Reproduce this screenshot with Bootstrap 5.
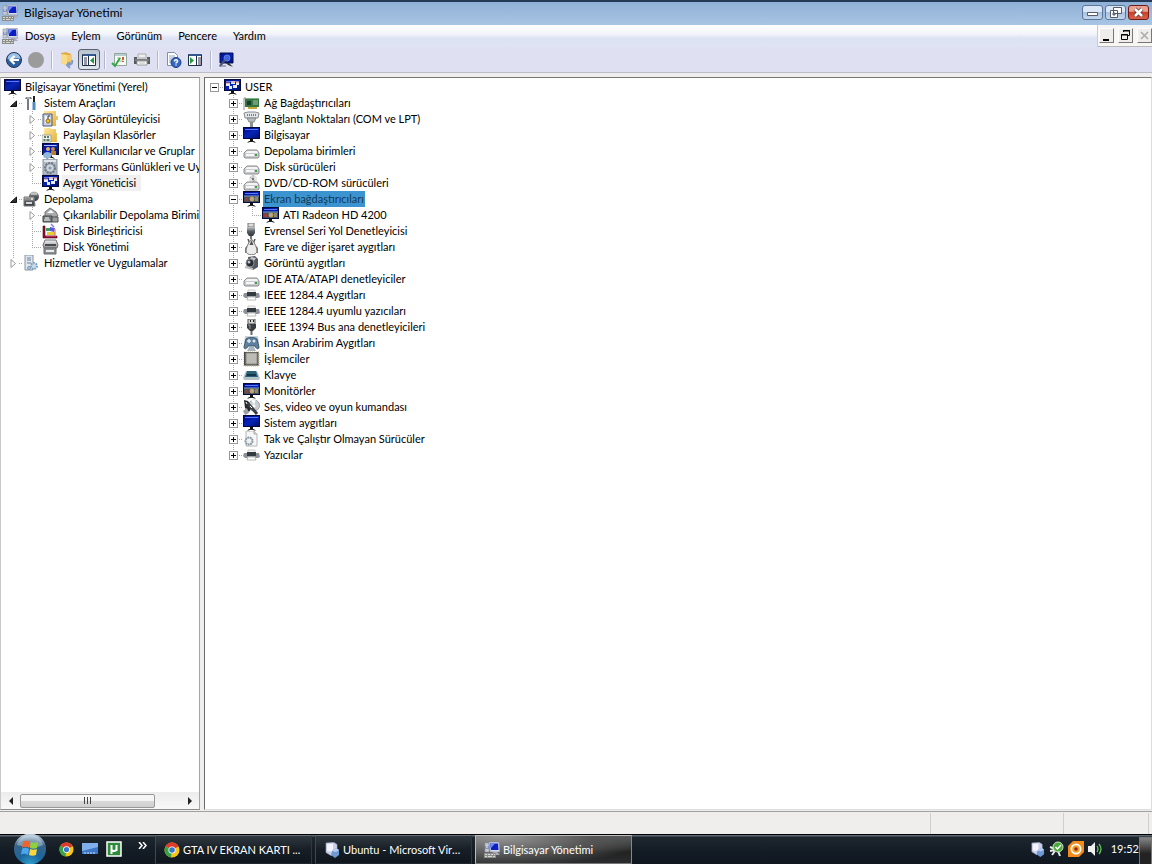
<!DOCTYPE html>
<html lang="tr">
<head>
<meta charset="utf-8">
<meta name="viewport" content="width=device-width, initial-scale=1">
<title>Bilgisayar Yönetimi</title>
<link href="https://cdn.jsdelivr.net/npm/bootstrap@5.3.0/dist/css/bootstrap.min.css" rel="stylesheet">
<style>
  body { font-family: Lato, Roboto, sans-serif; font-size: 11px; line-height: 16px; color: #000; background: #f0eeed; }
  button { font: inherit; color: inherit; }
  a { color: inherit; text-decoration: none; }
  .titlebar { height: 25px; border-top: 2px solid #223a55; background: linear-gradient(#8fb0d6, #a9c5e4); font-size: 12px; padding: 0 3px 2px 2px; }
  .win-btn { width: 21px; height: 15px; border: 1px solid #5b7699; border-radius: 3px; background: linear-gradient(#d9e6f5 45%, #a9c1de 50%, #c4d7ec); }
  .win-close { border-color: #701c14; background: linear-gradient(#eba191 40%, #c9402b 50%, #d9624a); }
  .win-controls { gap: 2px; }
  .menubar { height: 22px; background: linear-gradient(#fff, #f3f5fb 40%, #dde3f3 60%, #dfe4f4); padding-left: 2px; }
  .menu-links { gap: 16px; padding-left: 7px; }
  .caption { padding-left: 6px; }
  .mdi { width: 55px; height: 22px; background: #f7f6f5; border-left: 1px solid #ccc; border-bottom: 1px solid #bbb; }
  .mdi button { width: 15px; height: 15px; border: 1px solid; border-color: #fff #777 #777 #fff; background: #efedec; }
  .toolbar { height: 26px; background: #dfe1f3; border-bottom: 1px solid #bcbccb; padding-left: 3px; }
  .tool { width: 22px; height: 21px; border: 1px solid transparent; background: none; border-radius: 3px; }
  .tool.active { border-color: #59636f; background: linear-gradient(#b8c3cd, #dfe6ed); }
  .sep { width: 1px; height: 18px; background: #b4b7c9; margin: 0 4px; box-shadow: 1px 0 #f8f8ff; }
  .workspace { margin-top: 4px; }
  .pane { background: #fff; }
  .pane-left { width: 200px; border: 1px solid #8a8a8a; border-color: #8a8a8a #a5a5a5 #8a8a8a #c9c9c9; }
  .pane-right { margin-left: 4px; border-left: 1px solid #6c6c6c; border-top: 1px solid #777; border-bottom: 1px solid #ddd; border-right: 1px solid #ddd; padding-right: 8px; }
  .tree { padding-top: 1px; }
  .tree ul { list-style: none; margin: 0; padding: 0 0 0 19px; }
  .pane-left .tree { padding-left: 3px; }
  .pane-left .tree > li > ul { padding-left: 0; }
  .tree li li { position: relative; }
  .tree li li::before { content: ""; position: absolute; left: 9px; top: 0; bottom: 0; width: 1px; background: linear-gradient(#a8a8a8 1px, transparent 1px) 0 0 / 1px 2px; }
  .tree li li:last-child::before { bottom: auto; height: 8px; }
  .tree li li > ul { padding-left: 19px; }
  .node { height: 16px; }
  .twig { width: 19px; height: 16px; padding-left: 9px; background: linear-gradient(90deg, #a8a8a8 1px, transparent 1px) 0 8px / 2px 1px repeat-x content-box; }
  .twig > button { position: relative; width: 9px; height: 9px; margin-left: -4px; }
  .box { border: 1px solid #999; background: linear-gradient(#000, #000) 1px 3px / 5px 1px no-repeat #fff; }
  .box.plus { background: linear-gradient(#000, #000) 1px 3px / 5px 1px no-repeat, linear-gradient(#000, #000) 3px 1px / 1px 5px no-repeat, #fff; }
  .arrow { background: #fff; }
  .arrow svg { width: 9px; height: 9px; }
  .ico { width: 17px; height: 16px; margin-right: 3px; overflow: visible; }
  .label { padding: 0 1px; }
  .label.current { background: #f0f0f0; padding-right: 5px; }
  .label.selected { background: #3b93d0; color: #133a58; }
  .scroll { height: 17px; background: linear-gradient(#ececec, #f8f8f8); }
  .scroll .end { width: 19px; height: 16px; }
  .scroll .thumb { width: 135px; height: 14px; border: 1px solid #989898; border-radius: 2px; background: linear-gradient(#f6f6f6 45%, #dadada 50%, #cfcfcf); line-height: 8px; }
  .status { height: 23px; margin-top: 1px; border-top: 1px solid #a0a0a0; }
  .status div { border-left: 1px solid #d0cfce; margin-top: 1px; }
  .part-a { width: 133px; } .part-b { width: 85px; } .part-c { width: 4px; }
  .taskbar { height: 30px; background: linear-gradient(#000 1px, #5c6670 1px, #5c6670 2px, #1e262e 3px, #131b24 60%, #10171f); color: #fff; }
  .task { width: 157px; height: 29px; margin-right: 3px; border: 1px solid #3f474f; border-color: #67707a #30373e #20272e #3f474f; background: linear-gradient(#303840, #171e26 50%, #10161d); padding: 0 8px; }
  .task.on { border-color: #bbb #888 #777 #bbb; background: radial-gradient(ellipse at 15% 0, #9a9a9a, #555 50%, transparent 80%), linear-gradient(#5a5c5e, #222 60%, #2a2c2e); }
  .task svg { width: 16px; height: 16px; margin-right: 3px; }
  .quick { width: 155px; padding-left: 13px; }
  .quick button, .tray button { line-height: 0; }
  .desk { width: 13px; height: 28px; border: 1px solid #777; background: linear-gradient(#858585, #222 60%); }
</style>
</head>
<body class="d-flex flex-column min-vh-100">
<svg width="0" height="0" class="position-absolute" aria-hidden="true">
  <defs>
    <linearGradient id="blue" x2="1" y2="1"><stop stop-color="#000a8c"/><stop offset=".5" stop-color="#0524b8"/><stop offset="1" stop-color="#00106e"/></linearGradient>
    <linearGradient id="grey" x2="0" y2="1"><stop stop-color="#f4f4f4"/><stop offset="1" stop-color="#8d8d8d"/></linearGradient>
    <linearGradient id="dark" x2="0" y2="1"><stop stop-color="#c4c8ca"/><stop offset=".5" stop-color="#585c60"/><stop offset="1" stop-color="#33373b"/></linearGradient>
    <linearGradient id="gold" x2="1" y2="1"><stop stop-color="#ffe9a0"/><stop offset="1" stop-color="#e6b23c"/></linearGradient>
    <radialGradient id="orb" cx=".5" cy="1" r=".95"><stop stop-color="#2f9fd0"/><stop offset=".4" stop-color="#1b669c"/><stop offset=".8" stop-color="#3b6488"/><stop offset="1" stop-color="#b4c8da"/></radialGradient>
    <symbol id="console" viewBox="0 0 16 16"><path d="M1 1h4v9H1z" fill="#c5cad8" stroke="#8d93a4" stroke-width=".6"/><path d="M1 4h4v3H1z" fill="#8496bd"/><path d="M2 5h2" stroke="#dfe6f6"/><path d="M5 0h10l1 10H6z" fill="#d8dbe8" stroke="#8a8fa0" stroke-width=".8"/><path d="M6 1.500h8l.5 6.500H7z" fill="#0a1fc0"/><path d="M6 1.500h5L7 6z" fill="#6f8af0"/><path d="M9 10h4l3 3h-6z" fill="#a9acb8"/><path d="M0 11h12v5H0z" fill="#8b8e88"/><path d="M1 12.500h2m1 0h2m1 0h2m1 0h1M1 14.500h2m1 0h4m1 0h2" stroke="#d8d8d2"/></symbol>
    <symbol id="monitor" viewBox="0 0 17 16"><path d="M0 0h17v12H0z" fill="#050a3c"/><path d="M1 1h15v10H1z" fill="url(#blue)"/><path d="M2 2h13v1H2z" fill="#5d7bea"/><path d="M7 12h3v2H7z" fill="#111"/><path d="M4 16l2-2h5l2 2-3-1H7z" fill="#222"/></symbol>
    <symbol id="manager" viewBox="0 0 17 16"><use href="#monitor" width="17" height="16"/><path d="M2 4h4v3H2zM7 2h4v3H7zM12 3h3v3h-3zM5 7h3v3H5zM9 6h4v3H9z" fill="#e9edf8"/><path d="M2 4h4M7 3h4M12 3h3" stroke="#d48a8c"/></symbol>
    <symbol id="display" viewBox="0 0 17 16"><use href="#monitor" width="17" height="16"/><path d="M1 5h15v6H1z" fill="#45505b"/><path d="M1 5h15" stroke="#809bc0"/><path d="M2 7h3v3H2z" fill="#a23a32"/><circle cx="9" cy="8" r="2" fill="#aaa" stroke="#d0a645"/><path d="M12 7h3m-3 2h3" stroke="#d5c27a"/></symbol>
    <symbol id="tools" viewBox="0 0 17 16"><path d="M3 2h5l1 2H6v11H4V4H2z" fill="#777b82"/><path d="M4 3h3" stroke="#ddd"/><path d="M11 1v6" stroke="#222" stroke-width="2"/><path d="M11 7v8" stroke="#4c8fc0" stroke-width="3"/></symbol>
    <symbol id="eventlog" viewBox="0 0 17 16"><path d="M2 0h12v15H2z" fill="url(#gold)"/><path d="M14 5h2v4h-2z" fill="#e7c966"/><path d="M1 3h9v12H1z" fill="#c6d0e2" stroke="#4c5a78"/><path d="M3 5h5v7H3z" fill="#fff" opacity=".8"/><circle cx="6" cy="10" r="2" fill="#f2c42d" stroke="#8d6c10"/><path d="M6 8V5h2" stroke="#334" fill="none"/></symbol>
    <symbol id="shared" viewBox="0 0 17 16"><path d="M2 1h6l1 1h5v13H2z" fill="url(#gold)"/><path d="M14 6h1v9h-1z" fill="#e7c45c"/><path d="M0 8h9v7H0z" fill="#edf2ea" stroke="#849086" stroke-width=".7"/><path d="M2 10h2m1 0h2M1.500 13h2m1 0h3" stroke="#28543e" stroke-width="1.500"/></symbol>
    <symbol id="users" viewBox="0 0 17 16"><use href="#monitor" width="17" height="16"/><path d="M2 2h12v1H2z" fill="#b0c0ff"/><circle cx="6" cy="6" r="2" fill="#e4b063"/><circle cx="11" cy="6" r="2" fill="#c08944"/><path d="M9 8h5v4H9z" fill="#b87d2d"/><path d="M1 12c1-4 8-4 9 0l-2 3H2z" fill="#92b7de"/></symbol>
    <symbol id="perf" viewBox="0 0 17 16"><path d="M1 0h14v16H1z" fill="#b4bdc8" stroke="#8995a3"/><path d="M2 1h12v2H2z" fill="#dfe5ea"/><circle cx="8" cy="9" r="5" fill="#99a5b1" stroke="#6e7985" stroke-width="2" stroke-dasharray="2 1"/><circle cx="8" cy="9" r="3.500" fill="#cdd5dc"/><circle cx="8" cy="9" r="1.500" fill="#8796a4"/></symbol>
    <symbol id="storage" viewBox="0 0 17 16"><circle cx="11" cy="5.500" r="5" fill="url(#dark)"/><path d="M8 3h6" stroke="#e8e8e8"/><path d="M1 6h10l1 9H1z" fill="url(#dark)" stroke="#777"/><path d="M3 8h7M3 12h6" stroke="#d8d8d8" stroke-width="2"/><path d="M3 8h5" stroke="#444"/></symbol>
    <symbol id="removable" viewBox="0 0 17 16"><path d="M3 5l5-4 6 4 2 4-7 3-6-2z" fill="#a7abac" stroke="#707476"/><path d="M5 6l4-3 3 3" fill="#fff"/><path d="M1 9h9v6H1z" fill="#747b7c" stroke="#444"/><path d="M10 10h6v5h-6z" fill="#9a9f9f" stroke="#555"/><path d="M3 11h4M2 13h6" stroke="#fff"/></symbol>
    <symbol id="defrag" viewBox="0 0 17 16"><path d="M1 3h2v10h12v2H1z" fill="#8e1130" stroke="#520018" stroke-width=".6"/><path d="M4 5h4v3H4z" fill="#32a14e"/><path d="M5 9h8v3H5z" fill="#e4cf2f"/><path d="M8 4l5 1-1 4-4-1z" fill="#5c5bd5"/><path d="M9 1l3 3" stroke="#8b7ee0" stroke-width="1.500"/><path d="M4 13h10M13 6v6" stroke="#dc5f7f"/></symbol>
    <symbol id="diskmgmt" viewBox="0 0 17 16"><path d="M3 1h11l2 5-1 3H2L1 6z" fill="url(#grey)" stroke="#6c7176"/><path d="M3 6h11" stroke="#474c50" stroke-width="2"/><path d="M2 9h12v6H2z" fill="#8c9194" stroke="#666b6e"/><path d="M4 12h8" stroke="#e9e9e9" stroke-width="2"/></symbol>
    <symbol id="services" viewBox="0 0 17 16"><path d="M2 0h8v15H2z" fill="#dfe6ee" stroke="#8795a6"/><path d="M4 3h4M4 5h4M4 8h4" stroke="#6c8198"/><circle cx="11" cy="11" r="3" fill="#c7dceb" stroke="#7fa0bd" stroke-width="2" stroke-dasharray="1.600 1"/><circle cx="6" cy="13" r="1.500" fill="#b8cfdf" stroke="#799ab5"/></symbol>
    <symbol id="netcard" viewBox="0 0 17 16"><path d="M1 3v12M1 3h2" stroke="#8b9090" fill="none"/><path d="M2 3h14v9H2z" fill="#347444"/><path d="M2 3h14v1H2z" fill="#7eb387"/><path d="M4 6h4v4H4z" fill="#183d26"/><path d="M10 5h5v5h-5z" fill="#6b9e75"/><path d="M5 13h9" stroke="#c7aa35" stroke-width="2"/></symbol>
    <symbol id="port" viewBox="0 0 17 16"><path d="M1 2l4-1h7l4 1-1 5H2z" fill="#e2e5e7" stroke="#888e92"/><path d="M4 4h9" stroke="#7b8184" stroke-dasharray="1 1" stroke-width="2"/><path d="M4 7h9l-2 4H6z" fill="#b7bcc0" stroke="#888"/><path d="M8.500 11v5" stroke="#8b9094" stroke-width="3"/></symbol>
    <symbol id="drive" viewBox="0 0 17 16"><path d="M1 10l3-3h10l2 3v4l-1 1H2l-1-1z" fill="#c9cbcc" stroke="#8a8d8e"/><path d="M2 10l2-2h10l1 2z" fill="#f5f5f5"/><path d="M3 12h8" stroke="#f7f7f7" stroke-width="2"/><path d="M12 12h2" stroke="#3e9d52" stroke-width="2"/></symbol>
    <symbol id="dvd" viewBox="0 0 17 16"><circle cx="10" cy="4" r="4" fill="#e4e4e4"/><path d="M7 2l5 4M10 0v8" stroke="#aaa"/><circle cx="10" cy="4" r="1" fill="#666"/><use href="#drive" width="17" height="16"/></symbol>
    <symbol id="usb" viewBox="0 0 17 16"><path d="M5 0h6v4H5z" fill="#ddd" stroke="#777"/><path d="M4 4h8v6l-2 3H6l-2-3z" fill="url(#dark)"/><path d="M8 13v3" stroke="#777" stroke-width="2"/></symbol>
    <symbol id="mouse" viewBox="0 0 17 16"><path d="M5 0l2 5-4 4v5M12 0l-2 5 4 4v5" stroke="#555" stroke-width="1.500" fill="none"/><path d="M8.500 0C5 4 3 9 3 12c0 5 11 5 11 0 0-3-2-8-5.500-12z" fill="#ececec" stroke="#777"/><path d="M6.500 6l2-5 2 5z" fill="#555"/></symbol>
    <symbol id="camera" viewBox="0 0 17 16"><path d="M5 2l7-1 3 3v8l-5 3-4-3z" fill="#54595e"/><path d="M8 2l5 1-2 3-4-1z" fill="#c6cacc"/><circle cx="7" cy="8" r="4" fill="#292d31" stroke="#8b8f93"/><circle cx="6" cy="7" r="1.500" fill="#b8c6d6"/><path d="M2 12l8 2" stroke="#bbb" stroke-width="2"/></symbol>
    <symbol id="printer" viewBox="0 0 17 16"><path d="M5 3h7v3H5z" fill="#f1f1f1" stroke="#ccc"/><path d="M1 6h15l1 4-2 1H2L0 9z" fill="#8c9297"/><path d="M4 5h9v4H4z" fill="#333a40"/><path d="M5 10h7l1 3H4z" fill="#fff" stroke="#bbb"/></symbol>
    <symbol id="firewire" viewBox="0 0 17 16"><path d="M5 0h7v5H5z" fill="#d6d6d6" stroke="#555"/><path d="M7 2h1m2 0h1" stroke="#222" stroke-width="2"/><path d="M4 5h9v4l-3 3H7L4 9z" fill="#3b3e41"/><path d="M5 6h2v4" stroke="#999" fill="none"/><path d="M8.500 12v4" stroke="#666" stroke-width="2"/></symbol>
    <symbol id="hid" viewBox="0 0 17 16"><path d="M2 1h13l1 7H1z" fill="#c5d0d8"/><path d="M3 4c2-2 9-2 11 0l2 8c0 3-3 2-4-1H5c-1 3-4 4-4 1z" fill="#5c809e" stroke="#3c566e"/><path d="M6 4v4M4 6h4" stroke="#dce6ee" stroke-width="1.500"/><circle cx="11" cy="6" r="1.500" fill="#dce6ee"/><path d="M6 12h5l2 4H4z" fill="#a9b6c0"/></symbol>
    <symbol id="cpu" viewBox="0 0 17 16"><path d="M1 1h15v14H1z" fill="#8c887c" stroke="#bcb49c" stroke-width="1" stroke-dasharray="1 1"/><path d="M1 1h14v13H1z" fill="#4b4a46"/><path d="M3 2h11v11H3z" fill="#bcbbb5" stroke="#8f8e88"/></symbol>
    <symbol id="keyboard" viewBox="0 0 17 16"><path d="M3 4h11l3 7-1 2H1l-1-2z" fill="#b5c2c8"/><path d="M4 4h9l2 6H2z" fill="#2d6178"/><path d="M4 8h9" stroke="#16374a" stroke-width="2"/></symbol>
    <symbol id="sound" viewBox="0 0 17 16"><circle cx="11" cy="6.500" r="5.500" fill="#c9ced3" stroke="#9aa0a6"/><path d="M11 6L8 1l5-.5z" fill="#f5f7f8"/><circle cx="11" cy="7" r="1.500" fill="#fff"/><path d="M1 1l4 1 4 6-3 5-4-4z" fill="#26282b"/><path d="M5 5l4 4 5 6" stroke="#3b3f44" stroke-width="3"/><path d="M0 12l4-3 2 5-4 2z" fill="#9ba0a5"/><path d="M7 7l2 2M3 3l1 2" stroke="#fff"/></symbol>
    <symbol id="legacy" viewBox="0 0 17 16"><path d="M3 0h8l3 3v12H3z" fill="#f7f7f7" stroke="#b5b5b5"/><path d="M11 0v3h3" fill="#ddd" stroke="#aaa"/><circle cx="6" cy="10" r="3.500" fill="#eef2f4" stroke="#8a98a3" stroke-width="2" stroke-dasharray="1.800 .6"/></symbol>
    <symbol id="chrome" viewBox="0 0 16 16"><circle cx="8" cy="8" r="7.500" fill="#f5c518"/><path d="M8 8L1.500 4.200A7.500 7.500 0 0 1 14.500 4.500z" fill="#dd3b2c"/><path d="M8 8L1.500 4.200A7.500 7.500 0 0 0 7 15.400z" fill="#37a348"/><circle cx="8" cy="8" r="3.600" fill="#fff"/><circle cx="8" cy="8" r="2.800" fill="#3975c8"/></symbol>
    <symbol id="vpc" viewBox="0 0 16 16"><path d="M2 1l8-.5 3 2v9l-6 2-5-3z" fill="#c9d0e8" stroke="#a3adc9" stroke-width=".6"/><path d="M3 2l6-.5v8L3 9z" fill="#f3f4ff"/><path d="M8 9l4-3 3 2v5l-4 3-4-3z" fill="#6f99d3"/><path d="M8 9l4 1 3-2-3-2z" fill="#b6cdf0"/></symbol>
    <symbol id="closed" viewBox="0 0 9 9"><path d="M2 .5v8L6.500 4.500z" fill="#fff" stroke="#999"/></symbol>
    <symbol id="open" viewBox="0 0 9 9"><path d="M7.500 2v5.500H1.500z" fill="#333" stroke="#111"/></symbol>
  </defs>
</svg>

<header>
  <div class="titlebar d-flex align-items-center">
    <svg width="16" height="16"><use href="#console"/></svg>
    <span class="caption me-auto">Bilgisayar Yönetimi</span>
    <div class="win-controls d-flex">
      <button class="win-btn p-0 d-flex align-items-center justify-content-center" aria-label="Simge durumuna küçült"><svg width="13" height="9"><path d="M1.500 4.500h10v3h-10z" fill="#fff" stroke="#555b68"/></svg></button>
      <button class="win-btn p-0 d-flex align-items-center justify-content-center" aria-label="Önceki boyut"><svg width="13" height="11"><path d="M4.500.5h8v6h-8zM1.500 3.500h7v7h-7z" fill="#fff" stroke="#555b68"/><path d="M4 6h2v2H4z" fill="#8ba2bf" stroke="#555b68"/></svg></button>
      <button class="win-btn win-close p-0 d-flex align-items-center justify-content-center" aria-label="Kapat"><svg width="13" height="11"><path d="M3 2l7 7M10 2L3 9" stroke="#64332d" stroke-width="4"/><path d="M3 2l7 7M10 2L3 9" stroke="#fff" stroke-width="2.500"/></svg></button>
    </div>
  </div>
  <nav class="menubar d-flex align-items-center">
    <svg width="16" height="16"><use href="#console"/></svg>
    <div class="menu-links d-flex me-auto">
      <a href="#">Dosya</a><a href="#">Eylem</a><a href="#">Görünüm</a><a href="#">Pencere</a><a href="#">Yardım</a>
    </div>
    <div class="mdi d-flex align-items-center justify-content-center gap-1">
      <button class="p-0 d-flex" aria-label="Küçült"><svg width="13" height="13"><path d="M3 10h6v2H3z"/></svg></button>
      <button class="p-0 d-flex" aria-label="Geri yükle"><svg width="13" height="13" fill="none" stroke="#000"><path d="M4.500 3v-1.500h6v5H9M4 2h7M2.500 5.500h6v5h-6zM2 6h7"/></svg></button>
      <button class="p-0 d-flex" aria-label="Pencereyi kapat"><svg width="13" height="13"><path d="M3 3l7 7M10 3l-7 7" stroke="#aaa" stroke-width="1.500"/></svg></button>
    </div>
  </nav>
  <div class="toolbar d-flex align-items-center">
    <button class="tool p-0" aria-label="Geri"><svg width="18" height="18" viewBox="0 0 18 18"><circle cx="9" cy="9" r="7.500" fill="#2c5f9c" stroke="#1c355c"/><path d="M2.500 8a6.500 6 0 0 1 13 0c-4-2-9 1-13 0z" fill="#9dbfe2"/><path d="M14 9H6M9.500 5L5.500 9l4 4" stroke="#fff" stroke-width="2.200" fill="none"/></svg></button>
    <button class="tool p-0" aria-label="İleri"><svg width="18" height="18" viewBox="0 0 18 18"><circle cx="9" cy="9" r="8" fill="#9b9b9b"/></svg></button>
    <span class="sep"></span>
    <button class="tool p-0" aria-label="Yukarı"><svg width="18" height="18" viewBox="0 0 18 18"><path d="M3 2l5-1 5 2v11l-3 1-7-3z" fill="#e0ae48"/><path d="M3 3l6 1v11l-6-3z" fill="#fbdc86"/><path d="M9 4h5v7H9z" fill="#f3cb6c"/><path d="M14 9c1 3 0 5-5 5m3-3l-3 3 3 3" stroke="#7f9ccc" stroke-width="2" fill="none"/></svg></button>
    <button class="tool active p-0" aria-label="Konsol ağacını göster"><svg width="18" height="18" viewBox="0 0 18 18"><path d="M2.500 3.500h13v11h-13z" fill="#fff" stroke="#1d2f4c"/><path d="M3 4h12" stroke="#34588f" stroke-width="2"/><path d="M8 5h1v9H8z" fill="#1d2f4c"/><path d="M4 7h3M4 9h3M4 11h3M4 13h3" stroke="#334"/><path d="M14 6v7l-4-3.500z" fill="#229a3b"/></svg></button>
    <span class="sep"></span>
    <button class="tool p-0" aria-label="Özellikler"><svg width="18" height="18" viewBox="0 0 18 18"><path d="M3.500 2.500h12v12h-12z" fill="#f7fbf5" stroke="#93a69a"/><path d="M4 3h11v2H4z" fill="#b8cad4"/><path d="M6 7h4M6 10h6" stroke="#9ab7a3"/><path d="M12 6v3M12 10v1" stroke="#d45b2d" stroke-width="2"/><path d="M1 12l3 3 5-8" stroke="#35a848" stroke-width="2" fill="none"/></svg></button>
    <button class="tool p-0" aria-label="Yazdır"><svg width="18" height="18" viewBox="0 0 18 18"><path d="M5 3h8v4H5z" fill="#eee" stroke="#aaa"/><path d="M1 6h3v2h10V6h3v7H1z" fill="#565b60"/><path d="M2 9h14" stroke="#9da2a7"/><path d="M4 10h10v4H4z" fill="#fff" stroke="#999"/><path d="M6 12h6" stroke="#bbb"/></svg></button>
    <span class="sep"></span>
    <button class="tool p-0" aria-label="Yardım"><svg width="18" height="18" viewBox="0 0 18 18"><path d="M3.500 1.500h7l3 3v10h-10z" fill="#fff" stroke="#7e8fa8"/><path d="M5 5h6M5 7h6M5 9h5M5 11h3" stroke="#8ea6ca"/><circle cx="12" cy="11.500" r="5" fill="#3566bd" stroke="#183e8f"/><path d="M10.500 10.500c0-2.500 3.500-2 3 0-.3 1-1.500 1-1.500 2M12 13.500v1" stroke="#fff" stroke-width="1.500" fill="none"/></svg></button>
    <button class="tool p-0" aria-label="Eylem bölmesi"><svg width="18" height="18" viewBox="0 0 18 18"><path d="M2.500 3.500h13v11h-13z" fill="#fff" stroke="#1d2f4c"/><path d="M3 4h12" stroke="#34588f" stroke-width="2"/><path d="M10 5h1v9h-1z" fill="#1d2f4c"/><path d="M12 7h3M12 9h3M12 11h3M12 13h3" stroke="#334"/><path d="M4 6v7l4-3.500z" fill="#229a3b"/></svg></button>
    <span class="sep"></span>
    <button class="tool p-0" aria-label="Donanım değişikliklerini tara"><svg width="18" height="18" viewBox="0 0 18 18"><path d="M3 2h13v10H3z" fill="url(#blue)" stroke="#07104c"/><path d="M9 12h3l4 4-5-2z" fill="#333"/><circle cx="10" cy="7" r="3" fill="#3f64de" stroke="#5f7ddf"/><path d="M8 9l-5 6" stroke="#4a5270" stroke-width="2"/><path d="M2 15h7" stroke="#666c80"/></svg></button>
  </div>
</header>

<main class="workspace d-flex flex-grow-1">
  <aside class="pane pane-left d-flex flex-column flex-shrink-0 overflow-hidden">
    <ul class="tree list-unstyled mb-0 text-nowrap flex-grow-1">
      <li><div class="node d-flex align-items-center"><svg class="ico flex-shrink-0"><use href="#monitor"/></svg><span class="label">Bilgisayar Yönetimi (Yerel)</span></div>
        <ul>
          <li><div class="node d-flex align-items-center"><span class="twig d-flex align-items-center flex-shrink-0"><button class="arrow border-0 p-0 d-flex" aria-label="Daralt"><svg><use href="#open"/></svg></button></span><svg class="ico flex-shrink-0"><use href="#tools"/></svg><span class="label">Sistem Araçları</span></div>
            <ul>
              <li><div class="node d-flex align-items-center"><span class="twig d-flex align-items-center flex-shrink-0"><button class="arrow border-0 p-0 d-flex" aria-label="Genişlet"><svg><use href="#closed"/></svg></button></span><svg class="ico flex-shrink-0"><use href="#eventlog"/></svg><span class="label">Olay Görüntüleyicisi</span></div></li>
              <li><div class="node d-flex align-items-center"><span class="twig d-flex align-items-center flex-shrink-0"><button class="arrow border-0 p-0 d-flex" aria-label="Genişlet"><svg><use href="#closed"/></svg></button></span><svg class="ico flex-shrink-0"><use href="#shared"/></svg><span class="label">Paylaşılan Klasörler</span></div></li>
              <li><div class="node d-flex align-items-center"><span class="twig d-flex align-items-center flex-shrink-0"><button class="arrow border-0 p-0 d-flex" aria-label="Genişlet"><svg><use href="#closed"/></svg></button></span><svg class="ico flex-shrink-0"><use href="#users"/></svg><span class="label">Yerel Kullanıcılar ve Gruplar</span></div></li>
              <li><div class="node d-flex align-items-center"><span class="twig d-flex align-items-center flex-shrink-0"><button class="arrow border-0 p-0 d-flex" aria-label="Genişlet"><svg><use href="#closed"/></svg></button></span><svg class="ico flex-shrink-0"><use href="#perf"/></svg><span class="label">Performans Günlükleri ve Uy</span></div></li>
              <li><div class="node d-flex align-items-center"><span class="twig flex-shrink-0"></span><svg class="ico flex-shrink-0"><use href="#manager"/></svg><span class="label current">Aygıt Yöneticisi</span></div></li>
            </ul>
          </li>
          <li><div class="node d-flex align-items-center"><span class="twig d-flex align-items-center flex-shrink-0"><button class="arrow border-0 p-0 d-flex" aria-label="Daralt"><svg><use href="#open"/></svg></button></span><svg class="ico flex-shrink-0"><use href="#storage"/></svg><span class="label">Depolama</span></div>
            <ul>
              <li><div class="node d-flex align-items-center"><span class="twig d-flex align-items-center flex-shrink-0"><button class="arrow border-0 p-0 d-flex" aria-label="Genişlet"><svg><use href="#closed"/></svg></button></span><svg class="ico flex-shrink-0"><use href="#removable"/></svg><span class="label">Çıkarılabilir Depolama Birimi</span></div></li>
              <li><div class="node d-flex align-items-center"><span class="twig flex-shrink-0"></span><svg class="ico flex-shrink-0"><use href="#defrag"/></svg><span class="label">Disk Birleştiricisi</span></div></li>
              <li><div class="node d-flex align-items-center"><span class="twig flex-shrink-0"></span><svg class="ico flex-shrink-0"><use href="#diskmgmt"/></svg><span class="label">Disk Yönetimi</span></div></li>
            </ul>
          </li>
          <li><div class="node d-flex align-items-center"><span class="twig d-flex align-items-center flex-shrink-0"><button class="arrow border-0 p-0 d-flex" aria-label="Genişlet"><svg><use href="#closed"/></svg></button></span><svg class="ico flex-shrink-0"><use href="#services"/></svg><span class="label">Hizmetler ve Uygulamalar</span></div></li>
        </ul>
      </li>
    </ul>
    <div class="scroll d-flex align-items-center">
      <button class="end border-0 bg-transparent p-0 d-flex align-items-center justify-content-center" aria-label="Sola kaydır"><svg width="6" height="8"><path d="M5 0v8L1 4z" fill="#222"/></svg></button>
      <button class="thumb p-0 me-auto ms-0 d-flex align-items-center justify-content-center" aria-label="Kaydırma kutusu"><svg width="9" height="7"><path d="M1.500 0v7M4.500 0v7M7.500 0v7" stroke="#444"/></svg></button>
      <button class="end border-0 bg-transparent p-0 d-flex align-items-center justify-content-center" aria-label="Sağa kaydır"><svg width="6" height="8"><path d="M1 0v8l4-4z" fill="#222"/></svg></button>
    </div>
  </aside>
  <section class="pane pane-right flex-grow-1 overflow-hidden">
    <ul class="tree list-unstyled mb-0 text-nowrap">
      <li><div class="node d-flex align-items-center"><span class="twig d-flex align-items-center flex-shrink-0"><button class="box p-0" aria-label="Daralt"></button></span><svg class="ico flex-shrink-0"><use href="#manager"/></svg><span class="label">USER</span></div>
        <ul>
          <li><div class="node d-flex align-items-center"><span class="twig d-flex align-items-center flex-shrink-0"><button class="box plus p-0" aria-label="Genişlet"></button></span><svg class="ico flex-shrink-0"><use href="#netcard"/></svg><span class="label">Ağ Bağdaştırıcıları</span></div></li>
          <li><div class="node d-flex align-items-center"><span class="twig d-flex align-items-center flex-shrink-0"><button class="box plus p-0" aria-label="Genişlet"></button></span><svg class="ico flex-shrink-0"><use href="#port"/></svg><span class="label">Bağlantı Noktaları (COM ve LPT)</span></div></li>
          <li><div class="node d-flex align-items-center"><span class="twig d-flex align-items-center flex-shrink-0"><button class="box plus p-0" aria-label="Genişlet"></button></span><svg class="ico flex-shrink-0"><use href="#monitor"/></svg><span class="label">Bilgisayar</span></div></li>
          <li><div class="node d-flex align-items-center"><span class="twig d-flex align-items-center flex-shrink-0"><button class="box plus p-0" aria-label="Genişlet"></button></span><svg class="ico flex-shrink-0"><use href="#drive"/></svg><span class="label">Depolama birimleri</span></div></li>
          <li><div class="node d-flex align-items-center"><span class="twig d-flex align-items-center flex-shrink-0"><button class="box plus p-0" aria-label="Genişlet"></button></span><svg class="ico flex-shrink-0"><use href="#drive"/></svg><span class="label">Disk sürücüleri</span></div></li>
          <li><div class="node d-flex align-items-center"><span class="twig d-flex align-items-center flex-shrink-0"><button class="box plus p-0" aria-label="Genişlet"></button></span><svg class="ico flex-shrink-0"><use href="#dvd"/></svg><span class="label">DVD/CD-ROM sürücüleri</span></div></li>
          <li><div class="node d-flex align-items-center"><span class="twig d-flex align-items-center flex-shrink-0"><button class="box p-0" aria-label="Daralt"></button></span><svg class="ico flex-shrink-0"><use href="#display"/></svg><span class="label selected">Ekran bağdaştırıcıları</span></div>
            <ul>
              <li><div class="node d-flex align-items-center"><span class="twig flex-shrink-0"></span><svg class="ico flex-shrink-0"><use href="#display"/></svg><span class="label">ATI Radeon HD 4200</span></div></li>
            </ul>
          </li>
          <li><div class="node d-flex align-items-center"><span class="twig d-flex align-items-center flex-shrink-0"><button class="box plus p-0" aria-label="Genişlet"></button></span><svg class="ico flex-shrink-0"><use href="#usb"/></svg><span class="label">Evrensel Seri Yol Denetleyicisi</span></div></li>
          <li><div class="node d-flex align-items-center"><span class="twig d-flex align-items-center flex-shrink-0"><button class="box plus p-0" aria-label="Genişlet"></button></span><svg class="ico flex-shrink-0"><use href="#mouse"/></svg><span class="label">Fare ve diğer işaret aygıtları</span></div></li>
          <li><div class="node d-flex align-items-center"><span class="twig d-flex align-items-center flex-shrink-0"><button class="box plus p-0" aria-label="Genişlet"></button></span><svg class="ico flex-shrink-0"><use href="#camera"/></svg><span class="label">Görüntü aygıtları</span></div></li>
          <li><div class="node d-flex align-items-center"><span class="twig d-flex align-items-center flex-shrink-0"><button class="box plus p-0" aria-label="Genişlet"></button></span><svg class="ico flex-shrink-0"><use href="#drive"/></svg><span class="label">IDE ATA/ATAPI denetleyiciler</span></div></li>
          <li><div class="node d-flex align-items-center"><span class="twig d-flex align-items-center flex-shrink-0"><button class="box plus p-0" aria-label="Genişlet"></button></span><svg class="ico flex-shrink-0"><use href="#printer"/></svg><span class="label">IEEE 1284.4 Aygıtları</span></div></li>
          <li><div class="node d-flex align-items-center"><span class="twig d-flex align-items-center flex-shrink-0"><button class="box plus p-0" aria-label="Genişlet"></button></span><svg class="ico flex-shrink-0"><use href="#printer"/></svg><span class="label">IEEE 1284.4 uyumlu yazıcıları</span></div></li>
          <li><div class="node d-flex align-items-center"><span class="twig d-flex align-items-center flex-shrink-0"><button class="box plus p-0" aria-label="Genişlet"></button></span><svg class="ico flex-shrink-0"><use href="#firewire"/></svg><span class="label">IEEE 1394 Bus ana denetleyicileri</span></div></li>
          <li><div class="node d-flex align-items-center"><span class="twig d-flex align-items-center flex-shrink-0"><button class="box plus p-0" aria-label="Genişlet"></button></span><svg class="ico flex-shrink-0"><use href="#hid"/></svg><span class="label">İnsan Arabirim Aygıtları</span></div></li>
          <li><div class="node d-flex align-items-center"><span class="twig d-flex align-items-center flex-shrink-0"><button class="box plus p-0" aria-label="Genişlet"></button></span><svg class="ico flex-shrink-0"><use href="#cpu"/></svg><span class="label">İşlemciler</span></div></li>
          <li><div class="node d-flex align-items-center"><span class="twig d-flex align-items-center flex-shrink-0"><button class="box plus p-0" aria-label="Genişlet"></button></span><svg class="ico flex-shrink-0"><use href="#keyboard"/></svg><span class="label">Klavye</span></div></li>
          <li><div class="node d-flex align-items-center"><span class="twig d-flex align-items-center flex-shrink-0"><button class="box plus p-0" aria-label="Genişlet"></button></span><svg class="ico flex-shrink-0"><use href="#display"/></svg><span class="label">Monitörler</span></div></li>
          <li><div class="node d-flex align-items-center"><span class="twig d-flex align-items-center flex-shrink-0"><button class="box plus p-0" aria-label="Genişlet"></button></span><svg class="ico flex-shrink-0"><use href="#sound"/></svg><span class="label">Ses, video ve oyun kumandası</span></div></li>
          <li><div class="node d-flex align-items-center"><span class="twig d-flex align-items-center flex-shrink-0"><button class="box plus p-0" aria-label="Genişlet"></button></span><svg class="ico flex-shrink-0"><use href="#monitor"/></svg><span class="label">Sistem aygıtları</span></div></li>
          <li><div class="node d-flex align-items-center"><span class="twig d-flex align-items-center flex-shrink-0"><button class="box plus p-0" aria-label="Genişlet"></button></span><svg class="ico flex-shrink-0"><use href="#legacy"/></svg><span class="label">Tak ve Çalıştır Olmayan Sürücüler</span></div></li>
          <li><div class="node d-flex align-items-center"><span class="twig d-flex align-items-center flex-shrink-0"><button class="box plus p-0" aria-label="Genişlet"></button></span><svg class="ico flex-shrink-0"><use href="#printer"/></svg><span class="label">Yazıcılar</span></div></li>
        </ul>
      </li>
    </ul>
  </section>
</main>

<footer>
  <div class="status d-flex justify-content-end"><div class="part-a"></div><div class="part-b"></div><div class="part-c"></div></div>
  <div class="taskbar d-flex align-items-end">
    <div class="quick d-flex align-items-center align-self-stretch flex-shrink-0">
      <button class="border-0 bg-transparent p-0" aria-label="Başlat"><svg width="34" height="30" viewBox="0 0 34 30"><ellipse cx="17" cy="15" rx="16" ry="15.500" fill="url(#orb)"/><path d="M4 11C7-2 27-2 30 11c-8 4-17 2-26 0z" fill="#fff" opacity=".35"/><path d="M10 8c3-2 5-1 7 0l-1 6c-2-1-4-2-7 0z" fill="#f0642c"/><path d="M18 8c2 1 5 1 7 0l-1 6c-2 1-5 1-7 0z" fill="#8ed13c"/><path d="M9 15c3-2 5-1 7 0l-1 6c-2-1-4-2-7 0z" fill="#4aa7ee"/><path d="M17 15c2 1 5 1 7 0l-1 6c-2 1-5 1-7 0z" fill="#fdd43b"/></svg></button>
      <button class="border-0 bg-transparent p-0 ms-2 ps-1" aria-label="Chrome"><svg width="15" height="15"><use href="#chrome"/></svg></button>
      <button class="border-0 bg-transparent p-0 ms-2" aria-label="Masaüstünü göster"><svg width="16" height="14"><path d="M0 1h16v11H0z" fill="#3c76c5"/><path d="M0 1h16v4L0 9z" fill="#7fb0ec"/><path d="M2 11h12" stroke="#cfe1fa" stroke-dasharray="2 1"/></svg></button>
      <button class="border-0 bg-transparent p-0 ms-2" aria-label="µTorrent"><svg width="16" height="16"><path d="M1 1h14v14H1z" fill="#2e8b3a" stroke="#fff" stroke-width="1.500"/><path d="M5.500 13V4v5q2.500 2 5 0V4v6" stroke="#fff" stroke-width="2" fill="none"/></svg></button>
      <button class="border-0 bg-transparent p-0 ms-auto me-2 mb-2" aria-label="Diğer"><svg width="9" height="7"><path d="M1 0l3 3.500L1 7M5 0l3 3.500L5 7" stroke="#fff" stroke-width="1.500" fill="none"/></svg></button>
    </div>
    <button class="task d-flex align-items-center text-nowrap"><svg class="flex-shrink-0"><use href="#chrome"/></svg><span class="text-truncate">GTA IV EKRAN KARTI ...</span></button>
    <button class="task d-flex align-items-center text-nowrap"><svg class="flex-shrink-0"><use href="#vpc"/></svg><span class="text-truncate">Ubuntu - Microsoft Virt...</span></button>
    <button class="task on d-flex align-items-center text-nowrap"><svg class="flex-shrink-0"><use href="#console"/></svg><span class="text-truncate">Bilgisayar Yönetimi</span></button>
    <div class="tray d-flex align-items-center align-self-stretch ms-auto flex-shrink-0">
      <button class="border-0 bg-transparent p-0 me-1" aria-label="Virtual PC"><svg width="15" height="15"><use href="#vpc"/></svg></button>
      <button class="border-0 bg-transparent p-0 me-1" aria-label="Donanımı güvenle kaldır"><svg width="15" height="16" viewBox="0 0 15 16"><path d="M1 6l5 2M3 14l3-4M9 10l2 5M1 10l5-1" stroke="#e8e8e8" stroke-width="2"/><circle cx="9" cy="6" r="5" fill="#4ba93b" stroke="#cfe8c4"/><path d="M6.500 6l2 2 3.500-4" stroke="#fff" stroke-width="1.500" fill="none"/></svg></button>
      <button class="border-0 bg-transparent p-0 me-1" aria-label="Avast"><svg width="16" height="16" viewBox="0 0 16 16"><path d="M5 0h11v11l-5 5H0V5z" fill="#f28a1c"/><circle cx="8" cy="8" r="5.500" fill="#fff"/><circle cx="8" cy="8" r="3.800" fill="#f4a02c"/><circle cx="8" cy="8" r="1.800" fill="#8e2f10"/></svg></button>
      <button class="border-0 bg-transparent p-0 me-2" aria-label="Ses"><svg width="15" height="14" viewBox="0 0 15 14"><path d="M0 4h3l4-4v14l-4-4H0z" fill="#f0f0f0"/><path d="M9 4q2 3 0 6M11 2q4 5 0 10" stroke="#5fc35a" stroke-width="1.300" fill="none"/></svg></button>
      <time>19:52</time>
      <button class="desk p-0 mt-1" aria-label="Masaüstü"></button>
    </div>
  </div>
</footer>
<script src="https://cdn.jsdelivr.net/npm/bootstrap@5.3.0/dist/js/bootstrap.bundle.min.js"></script>
</body>
</html>
